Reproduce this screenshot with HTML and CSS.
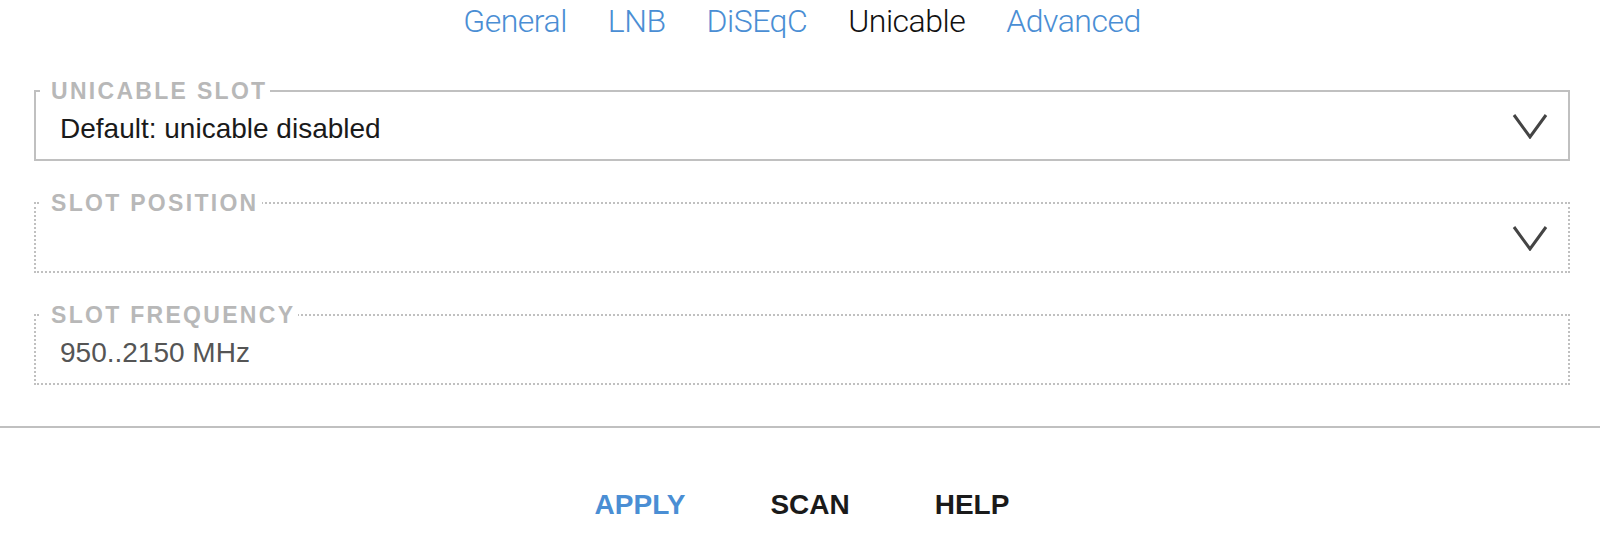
FILE: index.html
```html
<!DOCTYPE html>
<html lang="en">
<head>
<meta charset="utf-8">
<title>Unicable</title>
<link rel="stylesheet" href="styles.css">
</head>
<body>
<nav class="tabs">
  <a class="tab" href="#">General</a>
  <a class="tab" href="#">LNB</a>
  <a class="tab" href="#">DiSEqC</a>
  <span class="tab tab-active">Unicable</span>
  <a class="tab" href="#">Advanced</a>
</nav>
<form class="settings">
  <fieldset class="field">
    <legend class="field-label">UNICABLE SLOT</legend>
    <div class="field-row">
      <span class="field-value">Default: unicable disabled</span>
      <svg class="chevron" width="36" height="26" viewBox="0 0 36 26"><polyline points="2,2 18,24 34,2" fill="none" stroke="#444" stroke-width="3"/></svg>
    </div>
  </fieldset>
  <fieldset class="field field-dotted">
    <legend class="field-label">SLOT POSITION</legend>
    <div class="field-row">
      <span class="field-value"></span>
      <svg class="chevron" width="36" height="26" viewBox="0 0 36 26"><polyline points="2,2 18,24 34,2" fill="none" stroke="#444" stroke-width="3"/></svg>
    </div>
  </fieldset>
  <fieldset class="field field-dotted">
    <legend class="field-label">SLOT FREQUENCY</legend>
    <div class="field-row">
      <span class="field-value field-placeholder">950..2150 MHz</span>
    </div>
  </fieldset>
</form>
<hr class="divider">
<footer class="actions">
  <a class="action action-primary" href="#">APPLY</a>
  <a class="action" href="#">SCAN</a>
  <a class="action" href="#">HELP</a>
</footer>
</body>
</html>
```
FILE: styles.css
```css
html, body {
  margin: 0;
  padding: 0;
  background: #fff;
}
body {
  font-family: "Liberation Sans", Arial, sans-serif;
  color: #1a1a1a;
}
.tabs {
  display: flex;
  justify-content: center;
  gap: 41px;
  padding: 1px 0 0 4px;
  height: 40px;
  margin-bottom: 37px;
}
.tab {
  font-family: Roboto, "Liberation Sans", sans-serif;
  font-weight: 300;
  font-size: 32px;
  line-height: 40px;
  letter-spacing: -0.5px;
  color: #4a8ed4;
  text-decoration: none;
}
.tab-active {
  color: #111;
}
.settings {
  margin: 0 30px 0 34px;
}
.field {
  margin: 0 0 29px 0;
  padding: 0 0 14px 4px;
  border: 2px solid #c0c0c0;
  min-width: 0;
}
.field-dotted {
  border-style: dotted;
}
.field-label {
  padding: 0 3px 0 11px;
  font-size: 23px;
  line-height: 26px;
  font-weight: bold;
  letter-spacing: 2.3px;
  color: #b8b8b8;
}
.field-row {
  display: flex;
  align-items: flex-start;
  justify-content: space-between;
  padding: 9px 20px 0 20px;
  height: 32px;
}
.field-value {
  font-size: 28px;
  line-height: 32px;
  color: #1a1a1a;
}
.chevron {
  display: block;
  flex: none;
}
.field-placeholder {
  color: #555;
}
.divider {
  margin: 41px 0 0 0;
  border: 0;
  height: 2px;
  background: #c0c0c0;
}
.actions {
  display: flex;
  justify-content: center;
  gap: 85px;
  padding: 61px 0 0 4px;
}
.action {
  font-size: 28px;
  line-height: 32px;
  font-weight: bold;
  color: #1a1a1a;
  text-decoration: none;
}
.action-primary {
  color: #4a8ed4;
}
```
